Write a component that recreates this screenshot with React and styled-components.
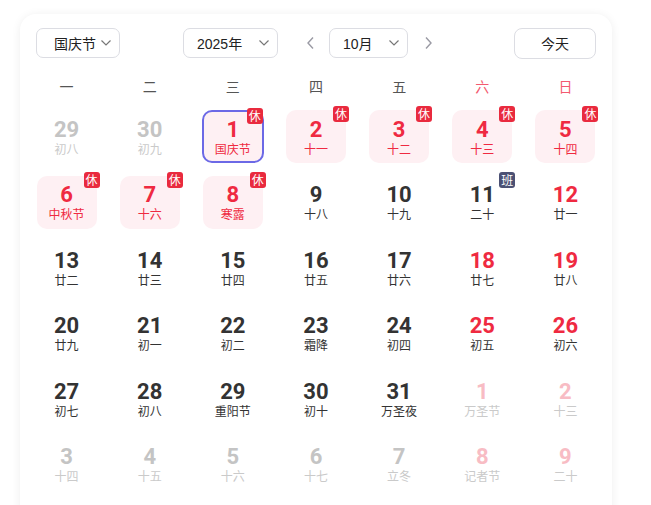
import React from "react"
import styled, { createGlobalStyle } from "styled-components"

const Global = createGlobalStyle`
  html, body {
    margin: 0;
    padding: 0;
    background: #fff;
    overflow: hidden;
  }
  body {
    font-family: "Liberation Sans", "Noto Sans CJK SC", sans-serif;
    color: #333;
  }
`

const RED = "#ef2a41"

const Page = styled.div`
  width: 651px;
  height: 505px;
  overflow: hidden;
  padding: 14px 0 0 20px;
  box-sizing: border-box;
`
const Card = styled.div`
  width: 592px;
  height: 520px;
  border-radius: 16px;
  background: #fff;
  box-shadow: 0 1px 10px rgba(0, 0, 0, 0.07);
  box-sizing: border-box;
`
const Header = styled.div`
  display: flex;
  align-items: center;
  padding: 14px 16px 0;
  height: 30px;
  box-sizing: content-box;
`
const Select = styled.div`
  width: ${p => p.w}px;
  height: 30px;
  box-sizing: border-box;
  border: 1px solid #dcdde3;
  border-radius: 7px;
  display: flex;
  align-items: center;
  justify-content: space-between;
  padding: 0 7px 0 ${p => p.pl || 13}px;
  margin-right: ${p => p.mr || 0}px;
  font-size: 14px;
  color: #222;
`
const NavButton = styled.div`
  width: 16px;
  height: 30px;
  display: flex;
  align-items: center;
  justify-content: center;
  margin: 0 ${p => p.mr}px 0 ${p => p.ml}px;
`
const TodayButton = styled.div`
  margin-left: auto;
  width: 82px;
  height: 31px;
  box-sizing: border-box;
  border: 1px solid #dcdde3;
  border-radius: 8px;
  display: flex;
  align-items: center;
  justify-content: center;
  font-size: 14px;
  color: #222;
`
const Body = styled.div`
  padding: 14px 5px 0;
`
const WeekRow = styled.div`
  display: grid;
  grid-template-columns: repeat(7, 1fr);
  height: 28px;
  margin-bottom: 10px;
`
const WeekDay = styled.div`
  display: flex;
  align-items: center;
  justify-content: center;
  font-family: "Noto Sans CJK SC", sans-serif;
  font-size: 14px;
  color: ${p => (p.weekend ? "#f35a70" : "#555")};
`
const Grid = styled.div`
  display: grid;
  grid-template-columns: repeat(7, 1fr);
  grid-auto-rows: 53px;
  row-gap: 12.6px;
`
const Cell = styled.div`
  display: flex;
  justify-content: center;
`
const DayBox = styled.div`
  position: relative;
  width: ${p => (p.selected ? 62 : 60)}px;
  height: 53px;
  box-sizing: border-box;
  border-radius: 10px;
  background: ${p => (p.rest ? "#fef0f3" : "transparent")};
  border: ${p => (p.selected ? "2px solid #6c69e6" : "none")};
  display: flex;
  flex-direction: column;
  align-items: center;
  justify-content: center;
  padding-top: 1px;
`
const Num = styled.div`
  font-family: Roboto, "Liberation Sans", sans-serif;
  font-weight: 700;
  font-size: 22px;
  line-height: 21px;
  margin-bottom: 2px;
  color: ${p => p.color};
`
const Lunar = styled.div`
  font-family: "Noto Sans CJK SC", sans-serif;
  font-size: 12px;
  line-height: 14px;
  color: ${p => p.color};
  white-space: nowrap;
`
const Badge = styled.div`
  position: absolute;
  top: -4px;
  right: ${p => (p.selected ? -1 : -3)}px;
  width: 16px;
  height: 16px;
  border-radius: 3px;
  background: ${p => (p.work ? "#4b5174" : "#e92a3e")};
  color: #fff;
  font-family: "Noto Sans CJK SC", sans-serif;
  font-size: 12px;
  line-height: 16px;
  text-align: center;
`
const Divider = styled.div`
  margin: 14px 12px 0;
  height: 1px;
  background: #f0f0f2;
`

const Chevron = () => (
  <svg width="12" height="8" viewBox="0 0 12 8">
    <polyline points="1.5,1.5 6,6 10.5,1.5" fill="none" stroke="#777" strokeWidth="1.2" />
  </svg>
)

const Arrow = ({ dir }) => (
  <svg width="9" height="14" viewBox="0 0 9 14">
    <polyline
      points={dir === "left" ? "7,1.5 2,7 7,12.5" : "2,1.5 7,7 2,12.5"}
      fill="none"
      stroke="#9a9aa4"
      strokeWidth="1.4"
    />
  </svg>
)

// n: day, l: lunar, o: other month, r: rest day (休), w: work day (班)
const days = [
  { n: 29, l: "初八", o: true }, { n: 30, l: "初九", o: true },
  { n: 1, l: "国庆节", r: true, sel: true }, { n: 2, l: "十一", r: true },
  { n: 3, l: "十二", r: true }, { n: 4, l: "十三", r: true }, { n: 5, l: "十四", r: true },
  { n: 6, l: "中秋节", r: true }, { n: 7, l: "十六", r: true }, { n: 8, l: "寒露", r: true },
  { n: 9, l: "十八" }, { n: 10, l: "十九" }, { n: 11, l: "二十", w: true }, { n: 12, l: "廿一" },
  { n: 13, l: "廿二" }, { n: 14, l: "廿三" }, { n: 15, l: "廿四" }, { n: 16, l: "廿五" },
  { n: 17, l: "廿六" }, { n: 18, l: "廿七" }, { n: 19, l: "廿八" },
  { n: 20, l: "廿九" }, { n: 21, l: "初一" }, { n: 22, l: "初二" }, { n: 23, l: "霜降" },
  { n: 24, l: "初四" }, { n: 25, l: "初五" }, { n: 26, l: "初六" },
  { n: 27, l: "初七" }, { n: 28, l: "初八" }, { n: 29, l: "重阳节" }, { n: 30, l: "初十" },
  { n: 31, l: "万圣夜" }, { n: 1, l: "万圣节", o: true }, { n: 2, l: "十三", o: true },
  { n: 3, l: "十四", o: true }, { n: 4, l: "十五", o: true }, { n: 5, l: "十六", o: true },
  { n: 6, l: "十七", o: true }, { n: 7, l: "立冬", o: true }, { n: 8, l: "记者节", o: true },
  { n: 9, l: "二十", o: true },
]

const weekNames = ["一", "二", "三", "四", "五", "六", "日"]

const colorsFor = (d, i) => {
  const weekend = i % 7 >= 5
  if (d.o) return { num: weekend ? "#f8bcc4" : "#c4c4c4", lunar: "#cacaca" }
  if (d.r) return { num: RED, lunar: RED }
  if (d.w) return { num: "#333", lunar: "#333" }
  return { num: weekend ? RED : "#333", lunar: "#333" }
}

export default function App() {
  return (
    <Page>
      <Global />
      <Card>
        <Header>
          <Select w={84} pl={17} mr={63}>
            <span>国庆节</span>
            <Chevron />
          </Select>
          <Select w={95}>
            <span>2025年</span>
            <Chevron />
          </Select>
          <NavButton ml={24} mr={11}>
            <Arrow dir="left" />
          </NavButton>
          <Select w={79}>
            <span>10月</span>
            <Chevron />
          </Select>
          <NavButton ml={12} mr={0}>
            <Arrow dir="right" />
          </NavButton>
          <TodayButton>今天</TodayButton>
        </Header>
        <Body>
          <WeekRow>
            {weekNames.map((w, i) => (
              <WeekDay key={w} weekend={i >= 5}>{w}</WeekDay>
            ))}
          </WeekRow>
          <Grid>
            {days.map((d, i) => {
              const c = colorsFor(d, i)
              return (
                <Cell key={i}>
                  <DayBox rest={d.r} selected={d.sel}>
                    <Num color={c.num}>{d.n}</Num>
                    <Lunar color={c.lunar}>{d.l}</Lunar>
                    {d.r && <Badge selected={d.sel}>休</Badge>}
                    {d.w && <Badge work>班</Badge>}
                  </DayBox>
                </Cell>
              )
            })}
          </Grid>
          <Divider />
        </Body>
      </Card>
    </Page>
  )
}
